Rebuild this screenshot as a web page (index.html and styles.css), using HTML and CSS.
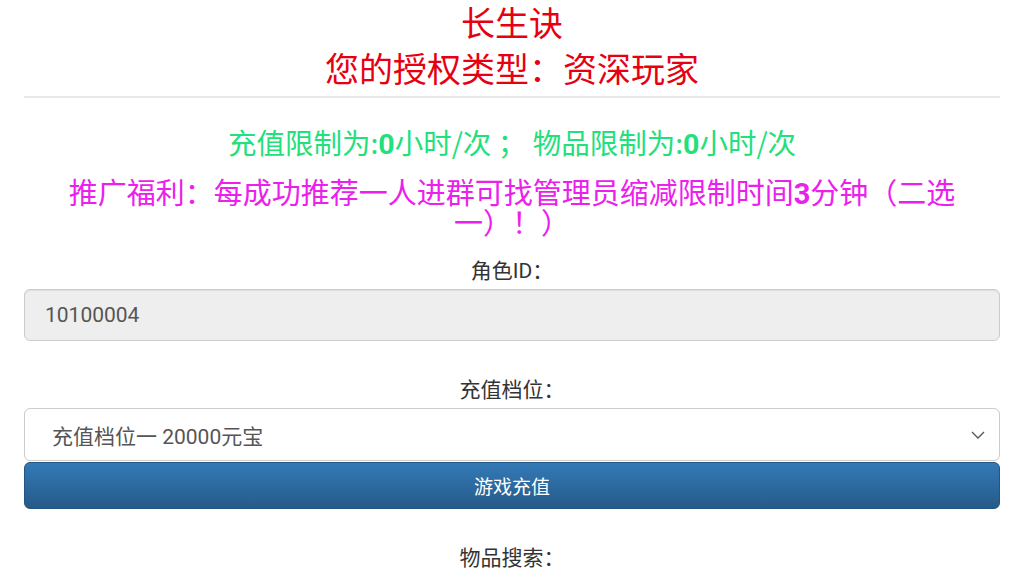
FILE: index.html
```html
<!DOCTYPE html>
<html lang="zh-CN">
<head>
<meta charset="utf-8">
<title>长生诀</title>
<link rel="stylesheet" href="styles.css">
</head>
<body>
<div class="page">
  <header class="head">
    <h2 class="title">长生诀</h2>
    <h2 class="title">您的授权类型：资深玩家</h2>
  </header>
  <hr class="rule">
  <p class="limit">充值限制为:<b>0</b>小时/次 ； 物品限制为:<b>0</b>小时/次</p>
  <p class="promo">推广福利：每成功推荐一人进群可找管理员缩减限制时间<b>3</b>分钟（二选一）！）</p>

  <div class="field">
    <label class="label">角色ID：</label>
    <div class="input readonly">10100004</div>
  </div>

  <div class="field">
    <label class="label">充值档位：</label>
    <div class="select">
      <span>充值档位一 20000元宝</span>
      <svg class="chev" width="14" height="8" viewBox="0 0 14 8"><path d="M1 1 L7 7 L13 1" fill="none" stroke="#555" stroke-width="1.3"/></svg>
    </div>
    <button class="btn">游戏充值</button>
  </div>

  <div class="field">
    <label class="label">物品搜索：</label>
    <div class="input"></div>
  </div>
</div>
</body>
</html>
```

FILE: styles.css
```css
html, body {
  margin: 0;
  padding: 0;
  background: #fff;
}
body {
  font-family: Roboto, "Noto Sans CJK SC", sans-serif;
  color: #333;
}
.page {
  padding: 0 24px;
}
.title {
  margin: 0;
  text-align: center;
  color: #e60012;
  font-family: "Noto Sans CJK SC", sans-serif;
  font-weight: 400;
  font-size: 34px;
  line-height: 48px;
}
.title:first-child {
  line-height: 44px;
}
.rule {
  margin: 4px 0 0;
  border: 0;
  border-top: 2px solid #e8e8e8;
  height: 0;
}
.limit {
  margin: 24px 0 0;
  text-align: center;
  color: #22e07a;
  font-family: "Noto Sans CJK SC", sans-serif;
  font-size: 28.5px;
  line-height: 40px;
}
.promo {
  margin: 14px auto 0;
  max-width: 900px;
  text-align: center;
  color: #ec20ec;
  font-family: "Noto Sans CJK SC", sans-serif;
  font-size: 29px;
  line-height: 30px;
}
.limit b, .promo b {
  font-family: Roboto, sans-serif;
  font-weight: 700;
  line-height: 0;
}
.field {
  display: flex;
  flex-direction: column;
  margin-top: 20px;
}
.field + .field {
  margin-top: 34px;
}
.label {
  display: block;
  text-align: center;
  font-size: 21px;
  line-height: 30px;
  margin-bottom: 3px;
  color: #333;
}
.input {
  box-sizing: border-box;
  height: 52px;
  border: 1px solid #ccc;
  border-radius: 6px;
  background: #fff;
  padding: 0 20px;
  display: flex;
  align-items: center;
  font-size: 21px;
  color: #555;
  box-shadow: inset 0 1px 1px rgba(0,0,0,0.075);
}
.input.readonly {
  background: #eee;
}
.select {
  box-sizing: border-box;
  height: 53px;
  border: 1px solid #ccc;
  border-radius: 6px;
  background: #fff;
  padding: 0 14px 0 27px;
  display: flex;
  align-items: center;
  justify-content: space-between;
  font-size: 21px;
  color: #555;
}
.chev {
  display: block;
}
.btn {
  margin-top: 1px;
  height: 47px;
  border: 1px solid #245580;
  border-radius: 6px;
  background: linear-gradient(to bottom, #337ab7 0%, #265a88 100%);
  color: #fff;
  font-family: Roboto, "Noto Sans CJK SC", sans-serif;
  font-size: 19px;
  cursor: pointer;
}
```
